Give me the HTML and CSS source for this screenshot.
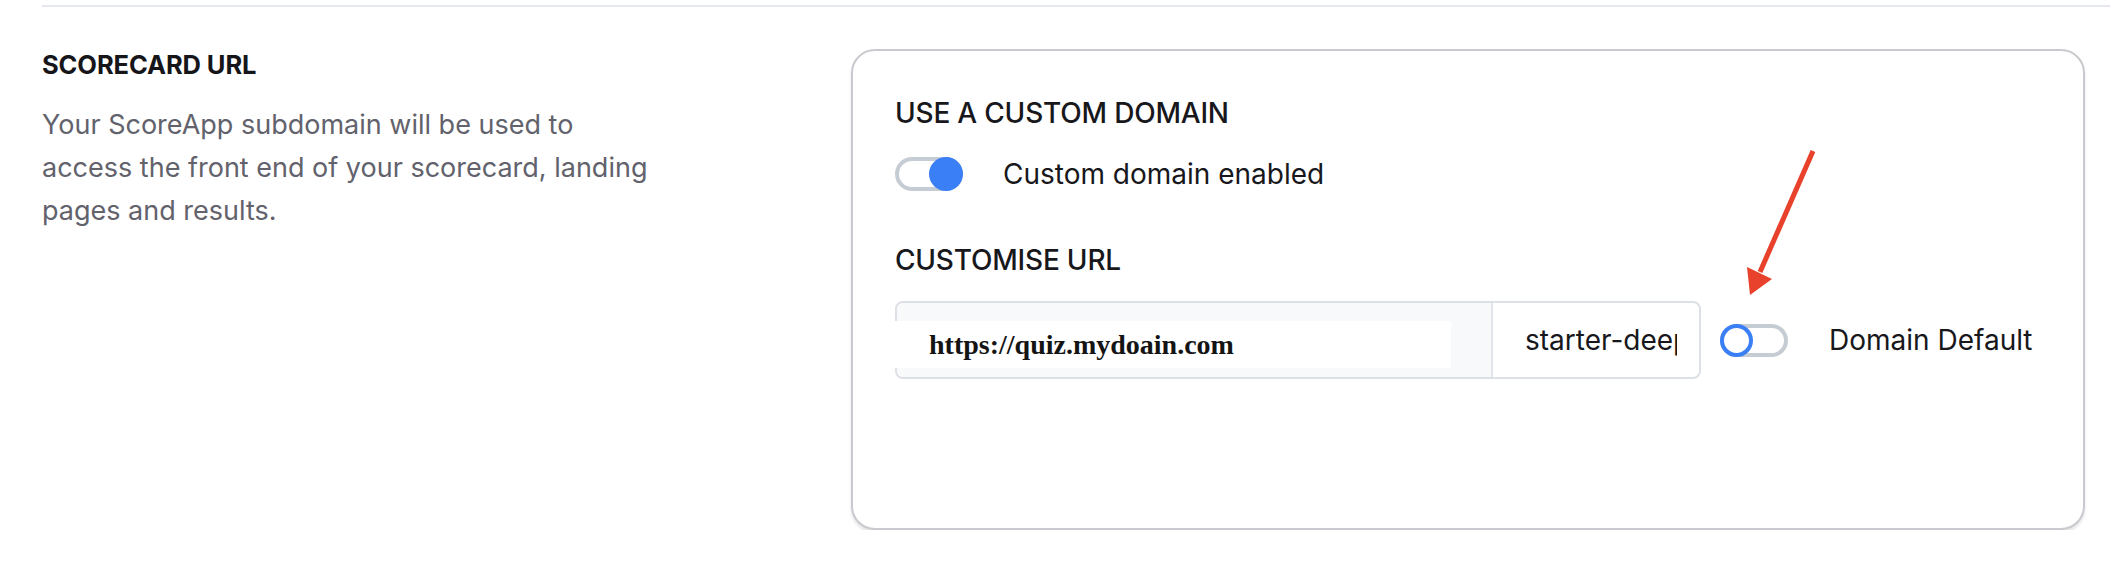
FILE: index.html
```html
<!DOCTYPE html>
<html lang="en">
<head>
<meta charset="utf-8">
<title>Scorecard URL</title>
<link rel="stylesheet" href="styles.css">
</head>
<body>
<div class="page">
  <div class="divider"></div>
  <section class="setting-row">
    <div class="setting-info">
      <h3 class="setting-title">SCORECARD URL</h3>
      <p class="setting-desc">Your ScoreApp subdomain will be used to access the front end of your scorecard, landing pages and results.</p>
    </div>
    <div class="card">
      <h4 class="card-heading">USE A CUSTOM DOMAIN</h4>
      <div class="toggle-row">
        <span class="toggle toggle-on"><span class="knob"></span></span>
        <span class="toggle-label">Custom domain enabled</span>
      </div>
      <h4 class="card-heading heading-url">CUSTOMISE URL</h4>
      <div class="url-row">
        <div class="url-group">
          <div class="url-prefix">
            <div class="url-overlay">https://quiz.mydoain.com</div>
          </div>
          <div class="url-slug"><span class="slug-text">starter-deep</span></div>
        </div>
        <span class="toggle toggle-off"><span class="knob"></span></span>
        <span class="toggle-label">Domain Default</span>
      </div>
      <svg class="annot-arrow" width="80" height="155" viewBox="0 0 80 155" aria-hidden="true">
        <line x1="73" y1="6" x2="20" y2="127" stroke="#e8412c" stroke-width="5" stroke-linecap="butt"/>
        <polygon points="10,150 7,122 32,134" fill="#e8412c"/>
      </svg>
    </div>
  </section>
</div>
</body>
</html>
```
FILE: styles.css
```css
* { box-sizing: border-box; }

html, body {
  margin: 0;
  padding: 0;
  background: #ffffff;
}

body {
  font-family: "Inter", "Noto Sans", sans-serif;
  color: #17171c;
}

.page {
  padding-left: 42px;
  overflow: hidden;
}

.divider {
  margin-top: 5px;
  height: 2px;
  background: #e5e8ed;
}

.setting-row {
  display: grid;
  grid-template-columns: 809px 1234px;
  margin-top: 42px;
}

.setting-title {
  margin: 0;
  font-size: 25.5px;
  line-height: 32px;
  font-weight: 700;
  letter-spacing: -0.1px;
  color: #15151a;
}

.setting-desc {
  margin: 22px 0 0;
  max-width: 610px;
  font-size: 27px;
  line-height: 43px;
  color: #62626c;
}

.card {
  position: relative;
  border: 2px solid #c9c9cf;
  border-radius: 24px;
  padding: 46px 42px 149px;
  box-shadow: 0 3px 3px rgba(0, 0, 0, 0.1);
  background: #fff;
}

.card-heading {
  margin: 0;
  font-size: 28px;
  line-height: 32px;
  font-weight: 500;
  letter-spacing: -0.2px;
  color: #17171c;
}

.heading-url {
  margin-top: 53px;
}

.toggle-row {
  margin-top: 28px;
  display: flex;
  align-items: center;
  gap: 40px;
}

.toggle-label {
  font-size: 28px;
  line-height: 32px;
  color: #17171c;
}

.toggle {
  position: relative;
  display: inline-block;
  flex: none;
  width: 68px;
  height: 34px;
  border: 4px solid #c6ccd4;
  border-radius: 17px;
  background: #fff;
}

.toggle .knob {
  position: absolute;
  top: -4px;
  width: 34px;
  height: 34px;
  border-radius: 50%;
}

.toggle-on .knob {
  right: -4px;
  background: #3a7ff6;
}

.toggle-off {
  height: 33px;
  margin-left: 19px;
}

.toggle-off .knob {
  left: -4px;
  width: 33px;
  height: 33px;
  border: 4px solid #3a7ff6;
  background: #fff;
}

.url-row {
  margin-top: 25px;
  display: flex;
  align-items: center;
}

.url-row .toggle-label {
  margin-left: 41px;
}

.url-group {
  display: flex;
  flex: none;
  width: 806px;
  height: 78px;
  border: 2px solid #dde0e6;
  border-radius: 8px;
}

.url-prefix {
  width: 596px;
  background: #f8f9fb;
  border-right: 2px solid #e1e4e9;
  border-radius: 6px 0 0 6px;
  padding-top: 18px;
}

.url-overlay {
  margin-left: -2px;
  width: 556px;
  height: 47px;
  background: #ffffff;
  padding-left: 34px;
  font-family: "Liberation Serif", "Times New Roman", serif;
  font-weight: 700;
  font-size: 28px;
  line-height: 47px;
  color: #141414;
  white-space: nowrap;
}

.url-slug {
  flex: 1;
  display: flex;
  align-items: center;
  padding: 0 22px 0 32px;
  overflow: hidden;
  border-radius: 0 6px 6px 0;
}

.slug-text {
  display: block;
  overflow: hidden;
  white-space: nowrap;
  width: 100%;
  font-size: 28px;
  line-height: 32px;
  color: #17171c;
}

.annot-arrow {
  position: absolute;
  left: 887px;
  top: 94px;
}
```
